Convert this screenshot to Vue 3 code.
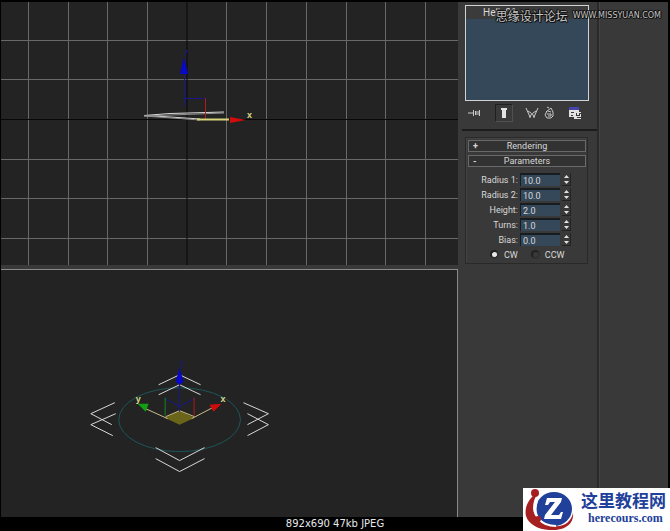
<template>
    <div class="screen">
        <main class="workspace">
            <section class="viewports">
                <svg class="viewport front" viewBox="1 2 457 263" role="img" aria-label="Front viewport">
                    <g class="grid" shape-rendering="crispEdges">
                        <line v-for="x in gridX" :key="'x' + x" :x1="x + 0.5" :x2="x + 0.5" y1="2" y2="265" />
                        <line v-for="y in gridY" :key="'y' + y" x1="1" x2="458" :y1="y + 0.5" :y2="y + 0.5" />
                    </g>
                    <path class="origin" d="M187 2V265M1 119.5H458" />
                    <path class="white" d="M224 112L170 113.5L144 115.5L170 117L200 119" />
                    <path class="white dim" d="M224 113L144 116L200 120" />
                    <path class="blue" d="M184.500 106V72M184.500 98.500H205" />
                    <path class="blue" d="M185 56L187 50M185 51H188" />
                    <path class="fillBlue" d="M184 57L188 74H180Z" />
                    <path class="red" d="M205.500 98V119" />
                    <path class="yellow" d="M197 119.500H229" />
                    <path class="fillRed" d="M246 120L230 117V123Z" />
                    <text class="axis" x="247" y="118">x</text>
                </svg>
                <svg class="viewport perspective" viewBox="1 269 457 248" role="img" aria-label="Perspective viewport">
                    <ellipse class="helix" cx="180" cy="419" rx="61" ry="32" />
                    <g class="white">
                        <path d="M159 384L180 374L201 384M159 394L180 384L201 394" />
                        <path d="M156 447L180 460L205 447M156 458L180 471L205 458" />
                        <path d="M115 402L91 413L112 424M116 413L91 424L113 435" />
                        <path d="M244 402L269 413L248 424M248 413L269 424L248 435" />
                    </g>
                    <path class="fillPlane" d="M180 410L195 417L180 424L165 417Z" />
                    <path class="cream" d="M166 416L180 410L195 416" />
                    <path class="cream" d="M168 418L146 408M192 418L213 407" />
                    <path class="blue" d="M180 411V378M166 398L180 406L194 398M181 368L183 361M180 361H183" />
                    <path class="green" d="M165.500 397V415" />
                    <path class="red" d="M194.500 397V415" />
                    <path class="fillBlue" d="M180 367L184 381L180 384L176 381Z" />
                    <path class="fillGreen" d="M138 403L149 403L146 411Z" />
                    <path class="fillRed" d="M222 403L210 404L214 411Z" />
                    <text class="axis" x="136" y="401">y</text>
                    <text class="axis" x="221" y="401">x</text>
                </svg>
            </section>

            <aside class="panel">
                <div class="stack">
                    <input v-model="objectName" class="objectName" aria-label="Object name">
                    <div class="modifiers"></div>
                </div>
                <div class="toolbar">
                    <button type="button" aria-label="Pin stack">
                        <svg viewBox="0 0 14 14">
                            <path class="icon" d="M0 7H5M5.500 4V10M7.500 5V9M7 6H11M7 8H11M11.500 4V10" />
                        </svg>
                    </button>
                    <button type="button" class="pressed" aria-label="Show end result">
                        <svg viewBox="0 0 14 14">
                            <path class="iconFill" d="M4 2H10V4H9V12H5V4H4Z" />
                        </svg>
                    </button>
                    <button type="button" aria-label="Make unique">
                        <svg viewBox="0 0 14 14">
                            <path class="icon" d="M1 2L5 11L7 7L9 11L13 2M3 5L6 7M8 7L11 5M4 11H6M8 11H10" />
                        </svg>
                    </button>
                    <button type="button" aria-label="Remove modifier">
                        <svg viewBox="0 0 14 14">
                            <path class="icon" d="M4 6L9 2L11 6V10L9 12H5L3 9L5 5M5 8H9V10H6M6 5L9 6M7 2L5 1" />
                        </svg>
                    </button>
                    <button type="button" aria-label="Configure modifier sets">
                        <svg viewBox="0 0 14 14">
                            <path class="iconFill" d="M1 1H11V11H1Z" />
                            <path class="iconBlue" d="M1 1H11V4H1Z" />
                            <path class="iconDark" d="M3 6H6V7H3ZM3 9H5V10H3Z" />
                            <path class="iconFill" d="M6 6H13V13H6Z" />
                            <path class="iconDark" d="M8 7H9V9H11V7H13V8H12V10H8ZM9 11H13V12H9Z" />
                        </svg>
                    </button>
                </div>
                <div class="rollouts">
                    <button type="button" class="rollout"><span class="sign">+</span>Rendering</button>
                    <button type="button" class="rollout"><span class="sign">-</span>Parameters</button>
                    <div class="params">
                        <div v-for="field in fields" :key="field.id" class="field">
                            <label :for="field.id">{{ field.label }}:</label>
                            <input :id="field.id" v-model="field.value" type="text">
                            <span class="spinner">
                                <button type="button" :aria-label="'Increase ' + field.label" @click="step(field, 1)">
                                    <svg viewBox="0 0 5 3"><path class="iconFill" d="M0 3L2.500 0L5 3Z" /></svg>
                                </button>
                                <button type="button" :aria-label="'Decrease ' + field.label" @click="step(field, -1)">
                                    <svg viewBox="0 0 5 3"><path class="iconFill" d="M0 0H5L2.500 3Z" /></svg>
                                </button>
                            </span>
                        </div>
                        <div class="direction">
                            <label><input v-model="direction" type="radio" name="direction" value="CW">CW</label>
                            <label><input v-model="direction" type="radio" name="direction" value="CCW">CCW</label>
                        </div>
                    </div>
                </div>
            </aside>
            <div class="empty"></div>
        </main>

        <footer class="status">892x690 47kb JPEG</footer>

        <div class="watermark">
            <span class="forum">思缘设计论坛</span>
            <span class="site">WWW.MISSYUAN.COM</span>
        </div>

        <div class="brand">
            <svg class="logo" viewBox="0 0 50 42">
                <path class="crimson" d="M13 5C5 10 0 19 2 28C5 38 18 43 32 42C43 41 50 35 49 25C47 34 40 39 30 38C18 37 9 29 9 20C9 14 11 9 14 5Z" />
                <circle class="crimson" cx="11" cy="5" r="4" />
                <ellipse class="navy" cx="30" cy="21" rx="18" ry="17" />
                <path class="swoosh" d="M13 13C8 28 17 38 32 38" />
                <circle class="crimson" cx="14" cy="31" r="3" />
                <path class="zed" d="M23 10H38L37 14L27 27H35L37 24H39L37 31H20L21 27L31 14H26L24 17H21Z" />
            </svg>
            <div class="brandText">
                <strong>这里教程网</strong>
                <span>herecours.com</span>
            </div>
        </div>
    </div>
</template>

<script setup>
import { ref } from 'vue';

const gridX = [28, 68, 107, 147, 226, 266, 306, 346, 385, 425]
const gridY = [40, 79, 159, 198, 238]

const objectName = ref('Helix01')
const direction = ref('CW')

const fields = ref([
    { id: 'radius1', label: 'Radius 1', value: '10.0' },
    { id: 'radius2', label: 'Radius 2', value: '10.0' },
    { id: 'height', label: 'Height', value: '2.0' },
    { id: 'turns', label: 'Turns', value: '1.0' },
    { id: 'bias', label: 'Bias', value: '0.0' },
])

function step(field, dir) {
    field.value = (Number(field.value) + dir * 0.1).toFixed(1)
}
</script>

<style>
body {
    margin: 0;
    background: #000;
}
</style>

<style scoped>
* {
    box-sizing: border-box;
}

.screen {
    position: relative;
    display: flex;
    flex-direction: column;
    min-height: 100vh;
    background: #000;
    color: #d8d8d8;
    font: 9px/12px Roboto, sans-serif;
}

button,
input {
    margin: 0;
    padding: 0;
    border: 0;
    color: inherit;
    font: inherit;
}

.workspace {
    flex: 1;
    display: grid;
    grid-template-columns: minmax(0, 1fr) 138px 69px;
    padding: 2px 2px 0 1px;
}

.viewports {
    display: flex;
    flex-direction: column;
    gap: 4px;
    padding-right: 3px;
    background: #393939;
}

.viewport {
    display: block;
    width: 100%;
    background: #232323;
}

.perspective {
    flex: 1;
    border-top: 1px solid #8a8a8a;
    border-right: 1px solid #8a8a8a;
}

svg path,
svg line,
svg ellipse {
    fill: none;
}

.grid {
    stroke: #686868;
}

.origin {
    stroke: #080808;
}

.white {
    stroke: #d8d8d8;
}

.dim {
    stroke: #909090;
}

.blue {
    stroke: #18188c;
}

.red {
    stroke: #b51a1a;
}

.green {
    stroke: #19851c;
}

.yellow {
    stroke: #d8d67a;
    stroke-width: 2;
}

.cream {
    stroke: #c9bd88;
}

.helix {
    stroke: #1d5558;
}

svg .fillBlue {
    fill: #0808c8;
}

svg .fillRed {
    fill: #d20b0b;
}

svg .fillGreen {
    fill: #12a012;
}

svg .fillPlane {
    fill: #6b6519;
}

.axis {
    fill: #d8d88a;
    font: bold 9px "Liberation Sans", Arial, sans-serif;
}

.panel {
    padding: 3px 8px 0 4px;
    border-right: 2px solid #292929;
    background: #393939;
}

.stack {
    display: flex;
    flex-direction: column;
    height: 96px;
    border: 1px solid #d0d4d6;
}

.objectName {
    width: 100%;
    height: 13px;
    padding-left: 17px;
    background: #3b3b3b;
    font-size: 10px;
}

.modifiers {
    flex: 1;
    background: #34485a;
}

.toolbar {
    display: grid;
    grid-template-columns: 29px 28px 17px 26px 22px;
    align-items: center;
    height: 30px;
    margin: 0 -8px 6px -3px;
    padding-bottom: 4px;
    border-bottom: 2px solid #1c1c1c;
}

.toolbar button {
    display: flex;
    align-items: center;
    justify-content: center;
    width: 18px;
    height: 18px;
    margin-left: 4px;
    background: none;
}

.toolbar svg {
    width: 14px;
    height: 14px;
}

.toolbar .pressed {
    border: 1px solid #202020;
    border-right-color: #505050;
    border-bottom-color: #505050;
}

svg .icon {
    stroke: #c9c9c9;
}

svg .iconFill {
    fill: #e2e2e2;
}

svg .iconBlue {
    fill: #4444aa;
}

svg .iconDark {
    fill: #393939;
}

.rollouts {
    margin-right: 1px;
    padding: 2px 1px 1px 2px;
    border: 1px solid #292929;
    box-shadow: inset 1px 1px #444;
}

.rollout {
    position: relative;
    display: block;
    width: 100%;
    height: 12px;
    margin-bottom: 3px;
    border: 1px solid #696969;
    background: #323232;
    line-height: 10px;
}

.sign {
    position: absolute;
    left: 4px;
    font-weight: bold;
}

.params {
    padding-top: 2px;
}

.field {
    display: grid;
    grid-template-columns: 50px 40px 9px;
    column-gap: 2px;
    align-items: center;
    height: 15px;
}

.field label {
    text-align: right;
    white-space: nowrap;
}

.field input {
    width: 100%;
    height: 13px;
    padding-left: 2px;
    border-top: 2px solid #171c21;
    border-left: 1px solid #171c21;
    background: #34485a;
}

.spinner {
    display: flex;
    flex-direction: column;
    border-right: 1px solid #232323;
    border-bottom: 1px solid #232323;
}

.spinner button {
    display: flex;
    align-items: center;
    justify-content: center;
    height: 6px;
    background: none;
}

.spinner svg {
    width: 5px;
    height: 3px;
}

.direction {
    display: flex;
    gap: 13px;
    height: 15px;
    padding-left: 22px;
}

.direction label {
    display: flex;
    align-items: center;
    gap: 5px;
}

.direction input {
    appearance: none;
    width: 9px;
    height: 9px;
    border: 2px solid #303030;
    border-top-color: #202020;
    border-left-color: #202020;
    border-radius: 50%;
    background: #393939;
}

.direction input:checked {
    background: #e8e8e8;
}

.empty {
    border-left: 1px solid #444;
    background: #393939;
}

.status {
    height: 14px;
    color: #e8e8e8;
    font: 10px/14px "DejaVu Sans", sans-serif;
    text-align: center;
}

.watermark {
    position: absolute;
    top: 9px;
    right: 9px;
    display: flex;
    align-items: center;
    gap: 5px;
    color: #c4c4c4;
    text-shadow: 1px 0 #111, -1px 0 #111, 0 1px #111, 0 -1px #111, 1px 1px #111, -1px -1px #111;
}

.forum {
    font: 12px/14px "Noto Sans CJK SC", sans-serif;
}

.site {
    font: 8px/14px "DejaVu Sans", sans-serif;
}

.brand {
    position: absolute;
    right: 0;
    bottom: 0;
    display: flex;
    gap: 7px;
    width: 147px;
    height: 43px;
    background: #fff;
}

.logo {
    flex: none;
    width: 50px;
    height: 42px;
    margin-left: 1px;
}

svg .crimson {
    fill: #a62022;
}

svg .navy {
    fill: #21409a;
}

svg .swoosh {
    stroke: #fff;
    stroke-width: 2;
}

svg .zed {
    fill: #fff;
}

.brandText {
    display: flex;
    flex-direction: column;
    color: #21409a;
    white-space: nowrap;
}

.brandText strong {
    padding-top: 2px;
    font: bold 17px/20px "Noto Sans CJK SC", sans-serif;
}

.brandText span {
    padding-left: 7px;
    font: bold 12px/16px "Liberation Serif", serif;
}
</style>
